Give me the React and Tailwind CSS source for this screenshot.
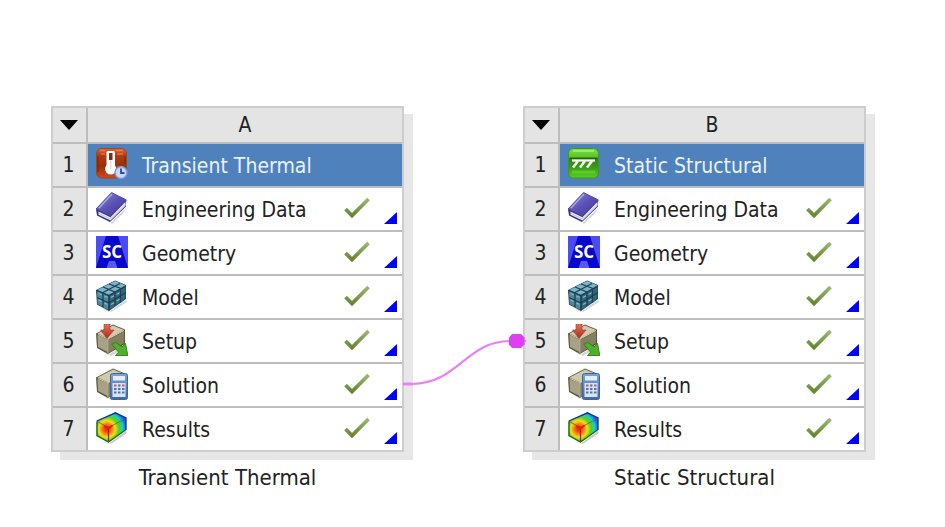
import clsx from 'clsx'

function Icon({ children }) {
  return (
    <svg viewBox="0 0 32 32" className="w-8 h-8 shrink-0" aria-hidden="true">
      {children}
    </svg>
  )
}

// Gradients shared by every icon on the canvas
function Gradients() {
  return (
    <svg width="0" height="0" className="absolute" aria-hidden="true">
      <defs>
        <linearGradient id="rust" x1="0" y1="0" x2="0" y2="1">
          <stop offset="0" stopColor="#d9683a" />
          <stop offset=".25" stopColor="#b23a10" />
          <stop offset=".6" stopColor="#96300c" />
          <stop offset="1" stopColor="#cf4a1c" />
        </linearGradient>
        <linearGradient id="leaf" x1="0" y1="0" x2="0" y2="1">
          <stop offset="0" stopColor="#7fe04a" />
          <stop offset=".28" stopColor="#5cc428" />
          <stop offset=".34" stopColor="#2f8410" />
          <stop offset=".65" stopColor="#3c9c16" />
          <stop offset="1" stopColor="#5ccf22" />
        </linearGradient>
        <linearGradient id="cover" x1="0" y1="0" x2="1" y2="1">
          <stop offset="0" stopColor="#8f8fdc" />
          <stop offset=".5" stopColor="#5a52b4" />
          <stop offset="1" stopColor="#3d3398" />
        </linearGradient>
        <linearGradient id="tick" x1="0" y1="0" x2="0" y2="1">
          <stop offset="0" stopColor="#9ab873" />
          <stop offset="1" stopColor="#66862f" />
        </linearGradient>
        <linearGradient id="redArrow" x1="0" y1="0" x2="0" y2="1">
          <stop offset="0" stopColor="#e0745c" />
          <stop offset="1" stopColor="#b02a18" />
        </linearGradient>
        <linearGradient id="keypad" x1="0" y1="0" x2="0" y2="1">
          <stop offset="0" stopColor="#7ea4d6" />
          <stop offset="1" stopColor="#3e68a4" />
        </linearGradient>
        <radialGradient id="heat" gradientUnits="userSpaceOnUse" cx="11" cy="17" r="23">
          <stop offset="0" stopColor="#e81c08" />
          <stop offset=".18" stopColor="#f46a10" />
          <stop offset=".36" stopColor="#f4dc18" />
          <stop offset=".52" stopColor="#58d020" />
          <stop offset=".68" stopColor="#18d0c0" />
          <stop offset=".82" stopColor="#1870e8" />
          <stop offset="1" stopColor="#1820b0" />
        </radialGradient>
      </defs>
    </svg>
  )
}

function ThermalIcon() {
  return (
    <Icon>
      <rect x="0.5" y="0.5" width="30" height="29.5" rx="5" fill="url(#rust)" stroke="#a8431e" />
      <path d="M4 2.5h5M20 2.5h7M5 6h4M21 6h6" stroke="#e88a5c" strokeWidth="1.6" opacity=".7" />
      <path d="M2 8v16M29 8v8" stroke="#6f2208" strokeWidth="1.4" opacity=".6" />
      <rect x="10.5" y="3" width="8.500" height="19" rx="1.500" fill="#fff" />
      <circle cx="14.700" cy="21" r="5.600" fill="#fff" />
      <path d="M13 5h3.500v7H13z" fill="#7c2c18" />
      <path d="M14.700 12v9" stroke="#e6d2cc" strokeWidth="1.2" />
      <circle cx="25" cy="24.5" r="6" fill="#c9d8f6" stroke="#7f94dc" strokeWidth="1.5" />
      <path d="M25 20.5v4.5h3.5" fill="none" stroke="#2b4aa8" strokeWidth="1.8" />
    </Icon>
  )
}

function StructuralIcon() {
  return (
    <Icon>
      <rect x="0.5" y="0.5" width="30" height="29.5" rx="5" fill="url(#leaf)" stroke="#3f9a1c" />
      <path d="M5 3h21" stroke="#a6f07c" strokeWidth="2" opacity=".8" />
      <path d="M2 10.5h27" stroke="#245f10" strokeWidth="1.5" />
      <path d="M4 12.5h23" stroke="#fff" strokeWidth="2.2" />
      <path d="M10 13l-5 6.500M17 13l-5 6.500M24 13l-5 6.500" stroke="#f2f7ee" strokeWidth="2.600" />
      <path d="M4 24h23" stroke="#66dc30" strokeWidth="3" opacity=".6" />
    </Icon>
  )
}

function BookIcon() {
  return (
    <Icon>
      <path d="M3 24l12 7 15-15-2 4-12 12z" fill="#b9b9c4" opacity=".7" />
      <path d="M0 17l1 6.500 13 6.500L30 14.500V8z" fill="#37307f" />
      <path d="M2.500 19.500l12 5.800L29.500 9.500v4.300L14.500 28.500l-12-5.800z" fill="#eeeef6" />
      <path d="M3 21.500l11.500 5.500L29.500 12" fill="none" stroke="#b4b4c8" strokeWidth=".8" />
      <path d="M0 17L15.500.5 30.500 8 14.500 24.500z" fill="url(#cover)" stroke="#463c9c" strokeWidth=".8" />
      <path d="M3 16L16 2" stroke="#a9a9ea" strokeWidth="1.4" />
    </Icon>
  )
}

function GeometryIcon() {
  return (
    <Icon>
      <rect width="32" height="32" fill="#4c4cf4" />
      <path d="M10 0h12l10 32H0z" fill="#0808cc" />
      <path d="M10.500 32l2.500-7h6l2.500 7z" fill="#5858f4" />
      <text
        x="16"
        y="22"
        textAnchor="middle"
        fill="#fff"
        className="font-['Open_Sans',sans-serif] text-[17px] font-bold"
      >
        SC
      </text>
    </Icon>
  )
}

function ModelIcon() {
  return (
    <Icon>
      <path d="M4 27l9 5 17-12 1 2-16 10z" fill="#b8c2c6" opacity=".7" />
      <path d="M0 10L19 .5 30 5v14L13 31 1 24.500z" fill="#1c3f50" />
      <path d="M1 10L19 1l10.500 4.500L13 15z" fill="#7cb4c9" />
      <path d="M1 11l11.500 5v14L1.500 24z" fill="#4f879c" />
      <path d="M13.500 16L29.500 6.500v12L13.500 30z" fill="#35667a" />
      <path
        d="M7 7l12 5M13 4l12 4.500M7 12.500L24 3.500M7 13v14M1 17.500l12 5.500 17-10.500M19 13v13M24.500 10v13M1 10.500l12 5 17-9.500M13 15.500v15"
        fill="none"
        stroke="#1c4152"
        strokeWidth="1.300"
      />
      <path
        d="M2.500 13.500l3 1.400M8.500 16l3 1.400M2.500 20l3 1.400M8.500 23l3 1.400M15 17.500l3-1.800M20.500 14.500l3-1.800M15 24.500l3-1.800M20.500 21l3-1.800"
        stroke="#86bccf"
        strokeWidth="1.1"
      />
    </Icon>
  )
}

// Tan solid that both the setup and solution icons are built on
function Block() {
  return (
    <>
      <path d="M3 25l9 6 17-10 1 2-15 9z" fill="#b5b5aa" opacity=".6" />
      <path d="M0 9.500L17 .5l12 5v14.500L12 30 1 24z" fill="#5b573f" />
      <path d="M1.500 9.500L17 1.500 28 6 12.500 14.500z" fill="#d0cbb0" />
      <path d="M1.500 11l10 4.500V28L2 23z" fill="#a8a284" />
      <path d="M13 15.500L28 7.500v11.500L13 28.500z" fill="#857f61" />
      <path d="M2 10.500l10 4.500 16-8.500M12 15v14" fill="none" stroke="#ebe7d2" strokeWidth=".8" />
    </>
  )
}

function SetupIcon() {
  return (
    <Icon>
      <Block />
      <path d="M8 0h6v6h4l-7 8.500L4.500 6H8z" fill="url(#redArrow)" stroke="#9c3c28" strokeWidth=".6" />
      <path
        d="M16 20.500l3.500-2.500 6.500 5 3.500-3.500 2.300 12H19.500l3-3.500z"
        fill="#4fb02a"
        stroke="#2d7a18"
        strokeWidth=".9"
      />
    </Icon>
  )
}

function SolutionIcon() {
  const keys = [17.5, 21, 24.5]
  return (
    <Icon>
      <Block />
      <rect x="14.500" y="5.500" width="17" height="26" rx="2" fill="url(#keypad)" stroke="#3d659e" />
      <rect x="17" y="8" width="12" height="4.500" fill="#e4eefa" />
      <rect x="16.500" y="15" width="13" height="14" fill="#d8e4f4" />
      {keys.map((y, row) => (
        <g key={y} fill={row === 0 ? '#c0606c' : '#54749f'}>
          <rect x="18" y={y - 1} width="2.500" height="2" />
          <rect x="22" y={y - 1} width="2.500" height="2" fill="#54749f" />
          <rect x="26" y={y - 1} width="2.500" height="2" />
        </g>
      ))}
    </Icon>
  )
}

function ResultsIcon() {
  return (
    <Icon>
      <path d="M4 26l9 5.500L30 19l1 2-16 11z" fill="#b0b0b0" opacity=".7" />
      <path d="M.5 9L19.500.5 30 5.500V18L12.500 30.500.5 24z" fill="url(#heat)" />
      <path d="M.8 9L19.500.8 24 3l6 3v12" fill="none" stroke="#142ab0" strokeWidth="1.3" />
      <path d="M1 9.500v14l11.500 6.500L29.500 18" fill="none" stroke="#176b24" strokeWidth="1.4" />
      <path d="M1 9.500l11.500 6L29.500 6.500" fill="none" stroke="#7c5410" strokeWidth="1" opacity=".75" />
      <path d="M12.500 15.500v14" stroke="#a02408" strokeWidth="1.2" />
      <path d="M8 14l4.500 2 4-2.500" fill="none" stroke="#e02008" strokeWidth="2" />
    </Icon>
  )
}

const STEPS = [
  { label: 'Engineering Data', icon: BookIcon },
  { label: 'Geometry', icon: GeometryIcon },
  { label: 'Model', icon: ModelIcon },
  { label: 'Setup', icon: SetupIcon },
  { label: 'Solution', icon: SolutionIcon },
  { label: 'Results', icon: ResultsIcon },
]

const SYSTEMS = [
  { column: 'A', title: 'Transient Thermal', icon: ThermalIcon, width: 'w-[353px]' },
  { column: 'B', title: 'Static Structural', icon: StructuralIcon, width: 'w-[343px]' },
]

function System({ column, title, icon, width }) {
  const rows = [{ label: title, icon, heading: true }, ...STEPS]
  return (
    <figure className={clsx('shrink-0', width)}>
      <table
        className="w-full table-fixed border-separate border-spacing-0 border-2 border-[#cdcdcd]
                   bg-white shadow-[9px_8px_0_#e7e7e7]"
      >
        <thead>
          <tr className="h-9 bg-[#e4e4e4]">
            <th className="w-[35px] p-0 pr-0.5 border-r-2 border-b-2 border-[#bdbdbd]">
              <button
                type="button"
                aria-label={`System ${column} menu`}
                className="flex w-full items-center justify-center"
              >
                <svg viewBox="0 0 18 10" className="w-[18px] h-[10px]">
                  <path d="M0 0h18L9 10z" />
                </svg>
              </button>
            </th>
            <th className="p-0 border-b-2 border-[#bdbdbd] font-normal leading-6">{column}</th>
          </tr>
        </thead>
        <tbody>
          {rows.map(({ label, icon: RowIcon, heading }, i) => {
            const line = i < rows.length - 1 && 'border-b-2'
            return (
              <tr key={label} className={i < rows.length - 1 ? 'h-11' : 'h-[42px]'}>
                <th
                  scope="row"
                  className={clsx(
                    'p-0 pr-0.5 bg-[#e4e4e4] border-r-2 border-[#bdbdbd] font-normal leading-6',
                    line,
                  )}
                >
                  {i + 1}
                </th>
                <td
                  className={clsx(
                    'p-0 pl-2 pb-0.5 border-[#bdbdbd]',
                    line,
                    heading && 'bg-[#4f81bc] text-[#eaf2fb]',
                  )}
                >
                  <div className="flex items-center">
                    <RowIcon />
                    <span className="pt-1 pl-3.5 leading-6 whitespace-nowrap">{label}</span>
                    {!heading && (
                      <>
                        <svg
                          viewBox="0 0 26 22"
                          className="ml-auto w-[26px] h-[22px]"
                          role="img"
                          aria-label="Up to date"
                        >
                          <path d="M1.500 12l6.500 6.500L24.500 2" fill="none" stroke="url(#tick)" strokeWidth="3.800" />
                        </svg>
                        <svg
                          viewBox="0 0 13 12"
                          className="ml-3.5 mr-[5px] w-[13px] h-3 self-end"
                          aria-hidden="true"
                        >
                          <path d="M13 0v12H0z" fill="#0000fe" />
                        </svg>
                      </>
                    )}
                  </div>
                </td>
              </tr>
            )
          })}
        </tbody>
      </table>
      <figcaption className="pt-3.5 text-center text-[22px] leading-6">{title}</figcaption>
    </figure>
  )
}

export default function App() {
  return (
    <main
      className="relative flex min-h-screen items-start gap-[119px] bg-white pt-[106px] pl-[51px]
                 font-['DejaVu_Sans_Condensed','Noto_Sans',sans-serif] text-[21px] text-[#222]"
    >
      <Gradients />
      {SYSTEMS.map((system) => (
        <System key={system.column} {...system} />
      ))}

      {/* Link from A6 to B5 */}
      <svg viewBox="0 0 124 60" className="absolute left-[403px] top-[332px] w-[124px] h-[60px]" aria-hidden="true">
        <path d="M0 52H9C58 50 62 9 108 9H123" fill="none" stroke="#ea80f6" strokeWidth="2.200" />
        <path d="M0 52h9" stroke="#ea80f6" strokeWidth="3" />
        <path d="M109 2h9l3.500 3.500v7L118 16h-9l-3-3.500v-7z" fill="#e03ef2" />
      </svg>
    </main>
  )
}
